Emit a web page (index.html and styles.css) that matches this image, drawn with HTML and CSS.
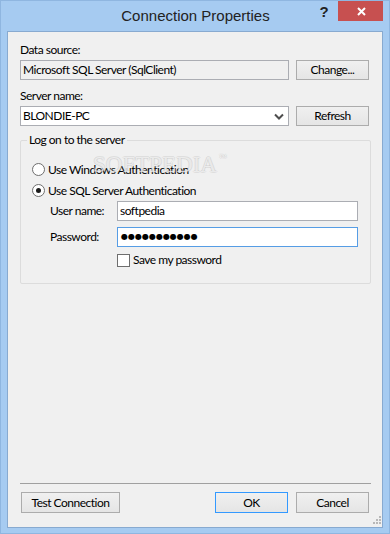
FILE: index.html
```html
<!DOCTYPE html>
<html>
<head>
<meta charset="utf-8">
<title>Connection Properties</title>
<link rel="stylesheet" href="styles.css">
</head>
<body>
<div class="window">
  <div class="titlebar">
    <div class="tb-spacer"></div>
    <div class="title">Connection Properties</div>
    <div class="tb-controls">
      <div class="help">?</div>
      <div class="close">
        <svg width="9" height="9" viewBox="0 0 9 9"><path d="M1 1L8 8M8 1L1 8" stroke="#fff" stroke-width="2" fill="none"/></svg>
      </div>
    </div>
  </div>
  <div class="client">
    <div class="label lbl-first">Data source:</div>
    <div class="row">
      <div class="field readonly">Microsoft SQL Server (SqlClient)</div>
      <div class="btn">Change...</div>
    </div>
    <div class="label lbl-second">Server name:</div>
    <div class="row">
      <div class="field combo">
        <span>BLONDIE-PC</span>
        <svg class="chev" width="10" height="7" viewBox="0 0 10 7"><path d="M1 1.5L5 5.5L9 1.5" stroke="#4d4d4d" stroke-width="2" fill="none"/></svg>
      </div>
      <div class="btn">Refresh</div>
    </div>
    <fieldset class="group">
      <legend>Log on to the server</legend>
      <div class="opt"><span class="radio"></span><span>Use Windows Authentication</span></div>
      <div class="opt"><span class="radio checked"></span><span>Use SQL Server Authentication</span></div>
      <div class="cred">
        <span class="cred-label">User name:</span>
        <div class="field cred-field">softpedia</div>
      </div>
      <div class="cred cred-gap">
        <span class="cred-label">Password:</span>
        <div class="field cred-field focused"><span class="dots">●●●●●●●●●●●</span></div>
      </div>
      <div class="check-row"><span class="check"></span><span>Save my password</span></div>
    </fieldset>
    <div class="watermark">SOFTPEDIA<span class="tm">™</span></div>
    <div class="footer">
      <div class="sep"></div>
      <div class="buttons">
        <div class="btn btn-test">Test Connection</div>
        <div class="push"></div>
        <div class="btn btn-ok">OK</div>
        <div class="btn">Cancel</div>
      </div>
    </div>
    <svg class="grip" width="9" height="9" viewBox="0 0 9 9">
      <rect x="7" y="1" width="2" height="2" fill="#b8b8b8"/>
      <rect x="4" y="4" width="2" height="2" fill="#b8b8b8"/>
      <rect x="7" y="4" width="2" height="2" fill="#b8b8b8"/>
      <rect x="1" y="7" width="2" height="2" fill="#b8b8b8"/>
      <rect x="4" y="7" width="2" height="2" fill="#b8b8b8"/>
      <rect x="7" y="7" width="2" height="2" fill="#b8b8b8"/>
    </svg>
  </div>
</div>
</body>
</html>
```
FILE: styles.css
```css
html, body {
  margin: 0;
  padding: 0;
}
body {
  width: 390px;
  height: 534px;
  overflow: hidden;
  font-family: Lato, "Liberation Sans", sans-serif;
  font-size: 12px;
  letter-spacing: -0.5px;
  color: #000;
}
.window {
  box-sizing: border-box;
  width: 390px;
  height: 534px;
  background: #a6cbf1;
  border: 1px solid #8fb6e0;
  padding: 0 6px 5px 6px;
  display: flex;
  flex-direction: column;
}
.titlebar {
  height: 30px;
  display: grid;
  grid-template-columns: 1fr auto 1fr;
  align-items: start;
}
.title {
  font-family: "Liberation Sans", Arial, sans-serif;
  font-size: 15px;
  letter-spacing: 0;
  color: #222;
  line-height: 18px;
  padding-top: 6px;
  margin-left: 1px;
}
.tb-controls {
  display: flex;
  justify-content: flex-end;
  align-items: flex-start;
}
.help {
  width: 26px;
  height: 20px;
  font-family: "Liberation Sans", Arial, sans-serif;
  font-weight: bold;
  font-size: 15px;
  letter-spacing: 0;
  color: #222;
  text-align: center;
  line-height: 20px;
  margin-right: 1px;
  padding-top: 1px;
}
.close {
  width: 45px;
  height: 20px;
  background: #c75050;
  display: flex;
  align-items: center;
  justify-content: center;
}
.close svg {
  margin-left: 1px;
}
.client {
  position: relative;
  flex: 1;
  background: #f0f0f0;
  border: 1px solid #88aad0;
  padding: 10px 11px 14px 12px;
  display: flex;
  flex-direction: column;
}
.label {
  line-height: 16px;
  height: 16px;
}
.lbl-second {
  margin-top: 8px;
}
.row {
  margin-top: 2px;
  display: grid;
  grid-template-columns: 269px 73px;
  column-gap: 7px;
}
.field {
  box-sizing: border-box;
  height: 20px;
  border: 1px solid #abadb3;
  background: #fff;
  padding: 0 2px;
  line-height: 18px;
  white-space: nowrap;
  overflow: hidden;
}
.readonly {
  background: #f0f0f0;
}
.combo {
  display: flex;
  align-items: center;
  justify-content: space-between;
  padding-right: 4px;
}
.chev {
  display: block;
  margin-top: 1px;
}
.btn {
  box-sizing: border-box;
  height: 20px;
  border: 1px solid #acacac;
  background: linear-gradient(#f0f0f0, #e5e5e5);
  text-align: center;
  line-height: 18px;
  white-space: nowrap;
}
.group {
  margin: 6px 0 0 0;
  padding: 11px 0 15px 6px;
  border: 1px solid #dcdcdc;
  border-radius: 2px;
  min-inline-size: 0;
}
.group legend {
  padding: 0 2px;
  line-height: 16px;
}
.opt {
  height: 21px;
  display: flex;
  align-items: center;
  line-height: 16px;
  margin-left: 5px;
}
.radio {
  box-sizing: border-box;
  width: 13px;
  height: 13px;
  border-radius: 50%;
  border: 1px solid #6e6e6e;
  background: #fff;
  margin-right: 3px;
  flex: none;
  position: relative;
}
.radio.checked::after {
  content: "";
  position: absolute;
  left: 3px;
  top: 3px;
  width: 5px;
  height: 5px;
  border-radius: 50%;
  background: #1c1c1c;
}
.cred {
  display: flex;
  align-items: center;
  margin-left: 23px;
}
.cred-gap {
  margin-top: 6px;
}
.cred-label {
  width: 67px;
  line-height: 16px;
}
.cred-field {
  width: 241px;
}
.focused {
  border-color: #569de5;
}
.dots {
  font-family: "DejaVu Sans", sans-serif;
  font-size: 8px;
  letter-spacing: 0;
  vertical-align: top;
  line-height: 18px;
  margin-left: 1px;
}
.check-row {
  margin-top: 5px;
  margin-left: 90px;
  display: flex;
  align-items: center;
  height: 16px;
  line-height: 16px;
}
.check {
  box-sizing: border-box;
  width: 13px;
  height: 13px;
  border: 1px solid #6e6e6e;
  background: #fff;
  margin-right: 3px;
  flex: none;
}
.watermark {
  position: absolute;
  left: 85px;
  top: 121px;
  font-family: "Liberation Serif", serif;
  font-size: 23px;
  line-height: 23px;
  letter-spacing: 0;
  color: rgba(250, 250, 250, 0.7);
  text-shadow: 1px 0 0 rgba(170, 170, 170, 0.25), -1px 0 0 rgba(170, 170, 170, 0.25), 0 1px 0 rgba(170, 170, 170, 0.25), 0 -1px 0 rgba(170, 170, 170, 0.25);
  pointer-events: none;
  white-space: nowrap;
}
.watermark .tm {
  font-size: 8px;
  vertical-align: top;
  line-height: 10px;
  margin-left: 2px;
}
.footer {
  margin-top: auto;
}
.sep {
  height: 1px;
  background: #a0a0a0;
}
.buttons {
  margin-top: 8px;
  display: flex;
  gap: 8px;
  padding: 0 2px 0 1px;
}
.buttons .btn {
  height: 21px;
  line-height: 19px;
  width: 73px;
}
.buttons .btn-test {
  width: 99px;
}
.push {
  flex: 1;
}
.buttons .btn-ok {
  border-color: #3399ff;
}
.grip {
  position: absolute;
  right: 1px;
  bottom: 3px;
}
```
